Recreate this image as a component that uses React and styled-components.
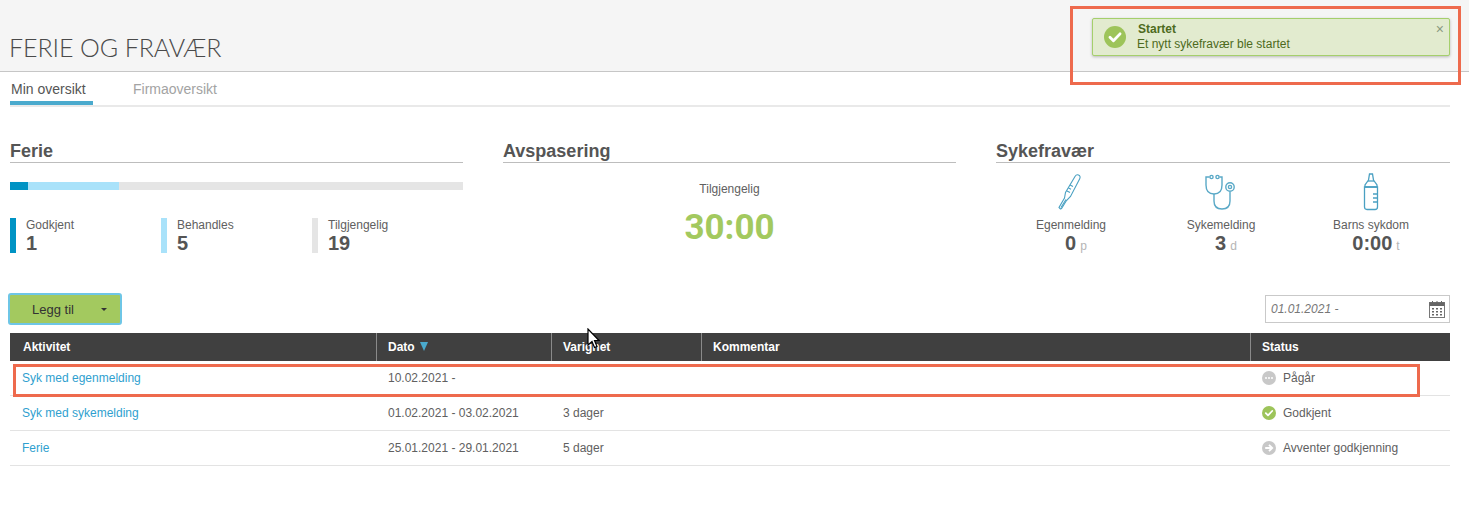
import React from "react";
import styled, { createGlobalStyle } from "styled-components";

const GlobalStyle = createGlobalStyle`
  html, body {
    margin: 0;
    padding: 0;
    background: #fff;
    font-family: "Liberation Sans", Arial, sans-serif;
    color: #555;
  }
  * { box-sizing: border-box; }
`;

const Page = styled.div`
  position: relative;
  width: 1469px;
  height: 508px;
  overflow: hidden;
`;

const Header = styled.header`
  height: 72px;
  background: #f5f5f5;
  border-bottom: 1px solid #c6c6c6;
  padding: 32px 0 0 9px;
`;

const Title = styled.h1`
  margin: 0;
  font-family: Lato, sans-serif;
  font-weight: 300;
  font-size: 25px;
  line-height: 30px;
  letter-spacing: -0.1px;
  color: #4a4a4a;
`;

const Content = styled.main`
  padding: 0 19px 0 10px;
`;

const Tabs = styled.nav`
  display: flex;
  height: 35px;
  border-bottom: 2px solid #e9e9e9;
`;

const Tab = styled.a`
  height: 33px;
  padding: 9px 1px 0;
  margin-right: 39px;
  width: ${(p) => (p.$active ? "83px" : "auto")};
  font-size: 14px;
  line-height: 17px;
  color: ${(p) => (p.$active ? "#555" : "#a3a3a3")};
  border-bottom: ${(p) => (p.$active ? "4px solid #4aaacd" : "none")};
`;

const Summary = styled.section`
  display: grid;
  grid-template-columns: 453px 453px 1fr;
  column-gap: 40px;
  height: 185px;
  padding-top: 34px;
`;

const Heading = styled.h2`
  margin: 0;
  height: 22px;
  font-size: 18px;
  line-height: 20px;
  font-weight: bold;
  color: #555;
  border-bottom: 1px solid #bdbdbd;
`;

const Bar = styled.div`
  display: flex;
  height: 8px;
  margin-top: 19px;
  background: #e5e5e5;
`;

const BarPart = styled.div`
  background: ${(p) => p.$color};
`;

const Legend = styled.div`
  display: grid;
  grid-template-columns: repeat(3, 151px);
  margin-top: 28px;
`;

const LegendItem = styled.div`
  height: 35px;
  padding-left: 10px;
  border-left: 6px solid ${(p) => p.$color};
`;

const SmallLabel = styled.div`
  font-size: 12px;
  line-height: 14px;
  color: #606060;
`;

const LegendValue = styled.div`
  font-size: 20px;
  line-height: 23px;
  font-weight: bold;
  color: #555;
`;

const Center = styled.div`
  text-align: center;
  padding-top: 19px;
`;

const BigValue = styled.div`
  margin-top: 12px;
  font-family: Roboto, sans-serif;
  font-size: 35px;
  line-height: 40px;
  font-weight: 700;
  color: #a3c95f;
`;

const AbsenceGrid = styled.div`
  display: grid;
  grid-template-columns: repeat(3, 1fr);
  padding: 10px 4px 0 0;
`;

const AbsenceItem = styled.div`
  display: flex;
  flex-direction: column;
  align-items: center;
`;

const IconSlot = styled.div`
  height: 38px;
  margin-bottom: 7px;
  svg { display: block; }
`;

const AbsenceValue = styled.div`
  padding-left: 10px;
  font-size: 20px;
  line-height: 23px;
  font-weight: bold;
  color: #555;
`;

const Unit = styled.span`
  margin-left: 4px;
  font-size: 12px;
  font-weight: normal;
  color: #b5b5b5;
`;

const Toolbar = styled.div`
  display: flex;
  justify-content: space-between;
  align-items: center;
  height: 32px;
  margin: 1px 0 8px -2px;
`;

const AddButton = styled.button`
  display: flex;
  align-items: center;
  width: 114px;
  height: 32px;
  padding: 0 0 0 22px;
  background: #a3c95f;
  border: 2px solid #6ec6e6;
  border-radius: 3px;
  font-family: inherit;
  font-size: 13px;
  font-weight: normal;
  color: #333;
`;

const Caret = styled.span`
  margin-left: 27px;
  border-left: 3px solid transparent;
  border-right: 3px solid transparent;
  border-top: 3px solid #333;
`;

const DateField = styled.div`
  display: flex;
  align-items: center;
  justify-content: space-between;
  width: 185px;
  height: 28px;
  padding: 0 4px 0 5px;
  border: 1px solid #c9c9c9;
  font-size: 12px;
  font-style: italic;
  color: #777;
`;

const Table = styled.table`
  width: 1440px;
  border-collapse: separate;
  border-spacing: 0;
  table-layout: fixed;
  font-size: 12px;
`;

const Th = styled.th`
  height: 28px;
  padding: 0 0 0 ${(p) => p.$pad || 11}px;
  background: #404040;
  color: #fff;
  font-weight: bold;
  text-align: left;
  border-left: 1px solid ${(p) => (p.$first ? "#404040" : "#8a8a8a")};
`;

const SortMark = styled.span`
  display: inline-block;
  margin-left: 5px;
  border-left: 4px solid transparent;
  border-right: 4px solid transparent;
  border-top: 9px solid #4aaacd;
`;

const Td = styled.td`
  height: 35px;
  padding: 0 0 0 ${(p) => p.$pad || 12}px;
  color: #606060;
  border-bottom: 1px solid #e3e3e3;
`;

const RowLink = styled.a`
  color: #2f9fcf;
`;

const Status = styled.span`
  display: flex;
  align-items: center;
  gap: 7px;
`;

const Toast = styled.div`
  position: absolute;
  top: 18px;
  left: 1092px;
  width: 358px;
  height: 38px;
  display: flex;
  align-items: center;
  padding-left: 11px;
  gap: 11px;
  background: #e2ebcf;
  border: 1px solid #a5cf6c;
  border-radius: 2px;
  box-shadow: 0 1px 3px rgba(0, 0, 0, 0.25);
  color: #4d6a20;
  font-size: 12px;
  line-height: 15px;
`;

const ToastTitle = styled.div`
  font-weight: bold;
  padding-left: 1px;
`;

const ToastClose = styled.span`
  position: absolute;
  top: 2px;
  right: 5px;
  font-size: 14px;
  line-height: 16px;
  color: #8a9a80;
`;

const Callout = styled.div`
  position: absolute;
  top: ${(p) => p.$top}px;
  left: ${(p) => p.$left}px;
  width: ${(p) => p.$w}px;
  height: ${(p) => p.$h}px;
  border: 3px solid #ee6a4d;
  pointer-events: none;
`;

const Cursor = styled.svg`
  position: absolute;
  top: 328px;
  left: 587px;
`;

const ThermometerIcon = () => (
  <svg width="30" height="38" viewBox="0 0 30 38" fill="none" stroke="#4aa0c2" strokeWidth="1.1">
    <path d="M4 35.5 L3 34.5 L8.5 25 L9.5 19.5 L19 3.5 Q20.5 1 22.5 2 Q25 3.2 23.6 6 L14.5 23.5 L10.5 27.5 L5.5 35.6 Q4.7 36.2 4 35.5 Z" />
    <path d="M5 34.5 L10 26.5 M14 12 L17 13.5 M12.5 15 L15 16.2 M11 18 L14 19.5" />
  </svg>
);

const StethoscopeIcon = () => (
  <svg width="34" height="38" viewBox="0 0 34 38" fill="none" stroke="#5aa9c7" strokeWidth="1.4">
    <circle cx="7.5" cy="4" r="1.6" />
    <circle cx="13.5" cy="4" r="1.6" />
    <path d="M5.5 4 H2 V12 Q2 21 10 21 Q18 21 18 12 V4 H15.5" />
    <path d="M10 21 V28 Q10 36 18 36 Q26 36 26 28 V19" />
    <circle cx="26" cy="14" r="4.2" />
    <circle cx="26" cy="14" r="1.6" />
  </svg>
);

const BottleIcon = () => (
  <svg width="16" height="38" viewBox="0 0 16 38" fill="none" stroke="#4aa0c2" strokeWidth="1.3">
    <path d="M6.5 1 H9.5 L10.5 7 L14 12 V14 H2 V12 L5.5 7 Z" />
    <path d="M5 8 H11" />
    <path d="M1.5 14 H14.5 V34 Q14.5 36.5 12 36.5 H4 Q1.5 36.5 1.5 34 Z" />
    <path d="M10 21 H14 M10 25 H14 M10 29 H14" />
  </svg>
);

const CalendarIcon = () => (
  <svg width="16" height="18" viewBox="0 0 16 18" fill="none">
    <rect x="0.5" y="2.5" width="15" height="15" fill="#fff" stroke="#777" />
    <rect x="0.5" y="2.5" width="15" height="3.5" fill="#666" />
    <path d="M3.5 1V3.5M8 1V3.5M12.5 1V3.5" stroke="#666" />
    <path d="M3 8h2v1.6H3zM7 8h2v1.6H7zM11 8h2v1.6h-2zM3 11h2v1.6H3zM7 11h2v1.6H7zM11 11h2v1.6h-2zM3 14h2v1.6H3zM7 14h2v1.6H7zM11 14h2v1.6h-2z" fill="#666" />
  </svg>
);

const CheckCircle = ({ size }) => (
  <svg width={size} height={size} viewBox="0 0 14 14">
    <circle cx="7" cy="7" r="7" fill="#9dc45a" />
    <path d="M3.8 7.2 L6 9.4 L10.2 5" fill="none" stroke="#fff" strokeWidth="1.8" strokeLinecap="round" strokeLinejoin="round" />
  </svg>
);

const PendingCircle = () => (
  <svg width="14" height="14" viewBox="0 0 14 14">
    <circle cx="7" cy="7" r="7" fill="#c8c8c8" />
    <circle cx="4" cy="7" r="1" fill="#fff" />
    <circle cx="7" cy="7" r="1" fill="#fff" />
    <circle cx="10" cy="7" r="1" fill="#fff" />
  </svg>
);

const ArrowCircle = () => (
  <svg width="14" height="14" viewBox="0 0 14 14">
    <circle cx="7" cy="7" r="7" fill="#c8c8c8" />
    <path d="M3.2 7 H10 M7 3.8 L10.2 7 L7 10.2" fill="none" stroke="#fff" strokeWidth="1.8" />
  </svg>
);

const rows = [
  { name: "Syk med egenmelding", date: "10.02.2021 -", length: "", status: "Pågår", icon: <PendingCircle /> },
  { name: "Syk med sykemelding", date: "01.02.2021 - 03.02.2021", length: "3 dager", status: "Godkjent", icon: <CheckCircle size={14} /> },
  { name: "Ferie", date: "25.01.2021 - 29.01.2021", length: "5 dager", status: "Avventer godkjenning", icon: <ArrowCircle /> },
];

const legend = [
  { label: "Godkjent", value: 1, color: "#0093c4" },
  { label: "Behandles", value: 5, color: "#a9e2fa" },
  { label: "Tilgjengelig", value: 19, color: "#e5e5e5" },
];

const absence = [
  { label: "Egenmelding", value: "0", unit: "p", icon: <ThermometerIcon /> },
  { label: "Sykemelding", value: "3", unit: "d", icon: <StethoscopeIcon /> },
  { label: "Barns sykdom", value: "0:00", unit: "t", icon: <BottleIcon /> },
];

export default function App() {
  return (
    <Page>
      <GlobalStyle />
      <Header>
        <Title>FERIE OG FRAVÆR</Title>
      </Header>

      <Content>
        <Tabs>
          <Tab $active>Min oversikt</Tab>
          <Tab>Firmaoversikt</Tab>
        </Tabs>

        <Summary>
          <div>
            <Heading>Ferie</Heading>
            <Bar>
              <BarPart $color="#0093c4" style={{ width: 18 }} />
              <BarPart $color="#a9e2fa" style={{ width: 91 }} />
            </Bar>
            <Legend>
              {legend.map((item) => (
                <LegendItem key={item.label} $color={item.color}>
                  <SmallLabel>{item.label}</SmallLabel>
                  <LegendValue>{item.value}</LegendValue>
                </LegendItem>
              ))}
            </Legend>
          </div>

          <div>
            <Heading>Avspasering</Heading>
            <Center>
              <SmallLabel>Tilgjengelig</SmallLabel>
              <BigValue>30:00</BigValue>
            </Center>
          </div>

          <div>
            <Heading>Sykefravær</Heading>
            <AbsenceGrid>
              {absence.map((item) => (
                <AbsenceItem key={item.label}>
                  <IconSlot>{item.icon}</IconSlot>
                  <SmallLabel>{item.label}</SmallLabel>
                  <AbsenceValue>
                    {item.value}
                    <Unit>{item.unit}</Unit>
                  </AbsenceValue>
                </AbsenceItem>
              ))}
            </AbsenceGrid>
          </div>
        </Summary>

        <Toolbar>
          <AddButton>
            Legg til
            <Caret />
          </AddButton>
          <DateField>
            01.01.2021 -
            <CalendarIcon />
          </DateField>
        </Toolbar>

        <Table>
          <colgroup>
            <col style={{ width: 366 }} />
            <col style={{ width: 175 }} />
            <col style={{ width: 150 }} />
            <col style={{ width: 549 }} />
            <col style={{ width: 200 }} />
          </colgroup>
          <thead>
            <tr>
              <Th $first $pad={12}>Aktivitet</Th>
              <Th>Dato<SortMark /></Th>
              <Th>Varighet</Th>
              <Th>Kommentar</Th>
              <Th>Status</Th>
            </tr>
          </thead>
          <tbody>
            {rows.map((row) => (
              <tr key={row.name}>
                <Td $pad={12}><RowLink>{row.name}</RowLink></Td>
                <Td>{row.date}</Td>
                <Td>{row.length}</Td>
                <Td />
                <Td>
                  <Status>
                    {row.icon}
                    {row.status}
                  </Status>
                </Td>
              </tr>
            ))}
          </tbody>
        </Table>
      </Content>

      <Toast>
        <CheckCircle size={22} />
        <div>
          <ToastTitle>Startet</ToastTitle>
          <div>Et nytt sykefravær ble startet</div>
        </div>
        <ToastClose>×</ToastClose>
      </Toast>

      <Callout $top={6} $left={1070} $w={391} $h={79} />
      <Callout $top={364} $left={13} $w={1407} $h={33} />

      <Cursor width="14" height="22" viewBox="0 0 14 22">
        <path d="M1 1 V17 L5 13.5 L7.5 19.5 L10 18.5 L7.5 12.5 H12 Z" fill="#fff" stroke="#000" strokeWidth="1.2" />
      </Cursor>
    </Page>
  );
}
